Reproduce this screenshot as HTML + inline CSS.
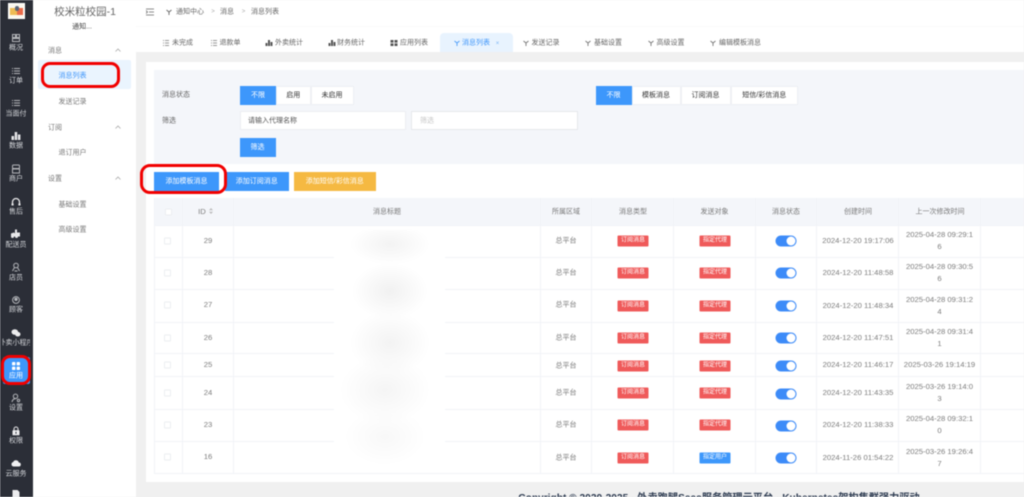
<!DOCTYPE html>
<html lang="zh"><head><meta charset="utf-8"><title>消息列表</title>
<style>
html,body{margin:0;padding:0;width:1024px;height:497px;overflow:hidden;background:#f0f0f0}
body{font-family:"Liberation Sans","Noto Sans CJK SC",sans-serif;font-size:7px;color:#666;position:relative}
#w{position:absolute;left:0;top:0;width:1024px;height:497px;overflow:hidden;filter:blur(.42px)}
.b{position:absolute;box-sizing:border-box}
.t{position:absolute;white-space:nowrap;transform:translate(-50%,-50%);line-height:1}
.l{position:absolute;white-space:nowrap;transform:translateY(-50%);line-height:1}
.s{color:#d4d6da;font-size:7px}
.i{position:absolute;transform:translate(-50%,-50%)}
.g{color:#777}
.btn{position:absolute;box-sizing:border-box;background:#fff;color:#333;text-align:center;font-size:7px;line-height:18px;height:19px;border:1px solid #eef0f4}
.on{background:#3d97fb;color:#fff;border-color:#3d97fb}
.tag{position:absolute;width:31px;height:11px;background:#ef5a5a;color:#fff;font-size:6px;line-height:11px;text-align:center;border-radius:1px;transform:translate(-50%,-50%)}
.sw{position:absolute;width:21px;height:11px;background:#3d8bf8;border-radius:6px;transform:translate(-50%,-50%)}
.sw:after{content:"";position:absolute;right:1px;top:1px;width:9px;height:9px;border-radius:50%;background:#fff}
.cb{position:absolute;box-sizing:border-box;left:164px;width:7px;height:7px;border:1px solid #eceef1;background:#fff;border-radius:1px;transform:translateY(-50%)}
.hl{position:absolute;left:154px;right:0;height:1px;background:#f1f3f7}
.vl{position:absolute;top:198px;height:276px;width:1px;background:#f1f3f7}
.r{position:absolute;border:3px solid #f10000;box-sizing:border-box;background:transparent}
.tb{color:#666;font-size:7px}
.c{color:#777;font-size:7px}
.d{color:#7c7c7c;font-size:7.7px}
</style></head><body><div id="w">

<!-- dark sidebar -->
<div class="b" style="left:0;top:0;width:33px;height:497px;background:#2b2e37"></div>
<div class="b" style="left:8px;top:3px;width:17px;height:16px;background:#fbf7ee;border:1px solid #fff"></div>
<div class="b" style="left:10px;top:8px;width:7px;height:7px;background:#eebb55"></div>
<div class="b" style="left:17px;top:8px;width:6px;height:7px;background:#ea6a4a"></div>
<div class="b" style="left:15px;top:6px;width:4px;height:5px;background:#5a6478;border-radius:2px"></div>

<svg class="i" style="left:16px;top:38px" width="8" height="8" viewBox="0 0 8 8" fill="none" stroke="#b4b6ba" stroke-width="1"><rect x=".5" y=".5" width="3" height="3"/><rect x="4.500" y=".5" width="3" height="3"/><rect x=".5" y="4.500" width="7" height="3"/></svg>
<svg class="i" style="left:16px;top:71px" width="8" height="7" viewBox="0 0 8 7" stroke="#b4b6ba" stroke-width="1"><path d="M0 1h1M2 1h6M0 3.500h1M2 3.500h6M0 6h1M2 6h6"/></svg>
<svg class="i" style="left:16px;top:103px" width="8" height="7" viewBox="0 0 8 7" stroke="#b4b6ba" stroke-width="1"><path d="M0 1h1M2 1h6M0 3.500h1M2 3.500h6M0 6h1M2 6h6"/></svg>
<svg class="i" style="left:16px;top:136px" width="9" height="8" viewBox="0 0 9 8" fill="#e8e8ea"><rect x="0" y="4" width="2.500" height="4"/><rect x="3.200" y="0" width="2.500" height="8"/><rect x="6.400" y="2.500" width="2.500" height="5.500"/></svg>
<svg class="i" style="left:16px;top:169px" width="9" height="9" viewBox="0 0 9 9" fill="none" stroke="#b4b6ba" stroke-width="1"><rect x="1" y=".5" width="7" height="3.500" rx="1"/><path d="M.5 4.500h8M1 4.500v4h7v-4"/></svg>
<svg class="i" style="left:16px;top:202px" width="9" height="9" viewBox="0 0 9 9" fill="none" stroke="#e8e8ea" stroke-width="1.300"><path d="M1 7V4.500a3.500 3.500 0 0 1 7 0V7"/><path d="M1 6v2M8 6v2" stroke-width="2.200"/></svg>
<svg class="i" style="left:16px;top:234px" width="10" height="9" viewBox="0 0 10 9" fill="#e8e8ea"><path d="M4 0h2v3h3v4H7a1.500 1.500 0 0 1-3 0H3a1.500 1.500 0 0 1-3 0V4l3-1 1 1z"/></svg>
<svg class="i" style="left:16px;top:267px" width="9" height="9" viewBox="0 0 9 9" fill="none" stroke="#b4b6ba" stroke-width="1"><circle cx="4.500" cy="3" r="2.300"/><path d="M1 8.500 3 5M8 8.500 6 5M3 8.500h3"/></svg>
<svg class="i" style="left:16px;top:300px" width="8" height="8" viewBox="0 0 8 8" fill="none" stroke="#b4b6ba" stroke-width="1"><circle cx="4" cy="4" r="3.400"/><circle cx="4" cy="3.300" r="1.200" fill="#b4b6ba"/></svg>
<svg class="i" style="left:16px;top:333px" width="9" height="8" viewBox="0 0 9 8" fill="#ececee"><ellipse cx="3.300" cy="3" rx="3.300" ry="2.800"/><ellipse cx="6.300" cy="5.200" rx="2.700" ry="2.300"/></svg>
<svg class="i" style="left:16px;top:398px" width="9" height="9" viewBox="0 0 9 9" fill="none" stroke="#b4b6ba" stroke-width="1"><circle cx="4" cy="2.800" r="2.200"/><path d="M.5 8.500C1 6 2.500 5.300 4 5.300"/><circle cx="7" cy="7" r="1.200"/></svg>
<svg class="i" style="left:16px;top:431px" width="8" height="9" viewBox="0 0 8 9"><path d="M2 4V2.500a2 2 0 0 1 4 0V4" fill="none" stroke="#e8e8ea" stroke-width="1"/><rect x=".5" y="3.800" width="7" height="5" rx=".6" fill="#ececee"/><rect x="3.500" y="5.300" width="1" height="2" fill="#2b2e37"/></svg>
<svg class="i" style="left:16px;top:463px" width="10" height="7" viewBox="0 0 10 7" fill="#f0f0f2"><path d="M2.500 7a2.300 2.300 0 0 1-.3-4.500A3 3 0 0 1 7.800 3 2 2 0 0 1 7.800 7z"/></svg>
<svg class="i" style="left:16px;top:494px" width="7" height="8" viewBox="0 0 7 8" fill="#ececee"><path d="M0 0h5l2 2v6H0z"/></svg>

<div class="t s" style="left:16px;top:48px">概况</div>
<div class="t s" style="left:16px;top:81px">订单</div>
<div class="t s" style="left:16px;top:113.500px">当面付</div>
<div class="t s" style="left:16px;top:146px">数据</div>
<div class="t s" style="left:16px;top:179px">商户</div>
<div class="t s" style="left:16px;top:212px">售后</div>
<div class="t s" style="left:16px;top:245px">配送员</div>
<div class="t s" style="left:16px;top:278px">店员</div>
<div class="t s" style="left:16px;top:310px">顾客</div>
<div class="b" style="left:2px;top:337px;width:28px;height:12px;overflow:hidden"><div class="t s" style="left:14px;top:6px">外卖小程序</div></div>
<div class="b" style="left:3px;top:357px;width:27px;height:27px;background:#3d97fb;border-radius:2px"></div>
<svg class="i" style="left:16px;top:366px" width="8" height="8" viewBox="0 0 8 8" fill="#fff"><rect width="3.400" height="3.400" rx=".8"/><rect x="4.600" width="3.400" height="3.400" rx=".8"/><rect y="4.600" width="3.400" height="3.400" rx=".8"/><rect x="4.600" y="4.600" width="3.400" height="3.400" rx=".8"/></svg>
<div class="t" style="left:16px;top:376px;color:#fff">应用</div>
<div class="t s" style="left:16px;top:408px">设置</div>
<div class="t s" style="left:16px;top:441px">权限</div>
<div class="t s" style="left:16px;top:474px">云服务</div>
<div class="r" style="left:1px;top:355px;width:30px;height:30px;border-radius:9px"></div>

<!-- second sidebar -->
<div class="b" style="left:33px;top:0;width:103px;height:497px;background:#fff"></div>
<div class="t" style="left:85px;top:12px;font-size:10.500px;color:#666">校米粒校园-1</div>
<div class="t" style="left:82px;top:27px;color:#444">通知...</div>
<div class="l g" style="left:48px;top:50.500px">消息</div>
<div class="l g" style="left:48px;top:127.500px">订阅</div>
<div class="l g" style="left:48px;top:178.500px">设置</div>
<svg class="i" style="left:117.500px;top:50px" width="6" height="4" viewBox="0 0 6 4" fill="none" stroke="#aaa" stroke-width=".8"><path d="M.5 3.500 3 1l2.500 2.500"/></svg>
<svg class="i" style="left:117.500px;top:127px" width="6" height="4" viewBox="0 0 6 4" fill="none" stroke="#aaa" stroke-width=".8"><path d="M.5 3.500 3 1l2.500 2.500"/></svg>
<svg class="i" style="left:117.500px;top:178px" width="6" height="4" viewBox="0 0 6 4" fill="none" stroke="#aaa" stroke-width=".8"><path d="M.5 3.500 3 1l2.500 2.500"/></svg>
<div class="b" style="left:38px;top:60px;width:93px;height:29px;background:#eaf4fe;border-radius:2px"></div>
<div class="l" style="left:58.500px;top:76px;color:#3f96fa">消息列表</div>
<div class="l g" style="left:58.500px;top:102px">发送记录</div>
<div class="l g" style="left:58.500px;top:153px">退订用户</div>
<div class="l g" style="left:58.500px;top:204.500px">基础设置</div>
<div class="l g" style="left:58.500px;top:230px">高级设置</div>
<div class="r" style="left:41px;top:62px;width:79px;height:26px;border-radius:9px"></div>

<!-- top header -->
<div class="b" style="left:136px;top:0;width:888px;height:26px;background:#fff"></div>
<div class="b" style="left:136px;top:26px;width:888px;height:1px;background:#fafafa"></div>
<div class="b" style="left:136px;top:27px;width:888px;height:25px;background:#fff"></div>
<div class="b" style="left:136px;top:52px;width:888px;height:10px;background:#f0f0f0"></div>
<svg class="i" style="left:150px;top:11.500px" width="8" height="7" viewBox="0 0 8 7" stroke="#666" stroke-width=".8" fill="none"><path d="M0 .5h8M3 3.500h5M0 6.500h8M0 2l1.500 1.500L0 5"/></svg>
<svg class="i" style="left:168.500px;top:12px" width="7" height="6" viewBox="0 0 7 6" fill="none" stroke="#666" stroke-width=".9"><path d="M1 1 3.500 3 6 1M3.500 3v3"/></svg>
<div class="l" style="left:176px;top:11.500px;color:#666">通知中心</div>
<div class="t" style="left:213px;top:11.500px;color:#aaa;font-size:6px">&gt;</div>
<div class="l" style="left:220px;top:11.500px;color:#666">消息</div>
<div class="t" style="left:243.500px;top:11.500px;color:#aaa;font-size:6px">&gt;</div>
<div class="l" style="left:251px;top:11.500px;color:#666">消息列表</div>

<!-- tabs -->
<div class="b" style="left:440px;top:33px;width:73px;height:19px;background:#e8f3fe;border-radius:4px 4px 0 0"></div>
<svg class="i" style="left:166px;top:43px" width="6" height="6" viewBox="0 0 6 6" stroke="#777" stroke-width=".8"><path d="M0 .5h1M2 .5h4M0 3h1M2 3h4M0 5.500h1M2 5.500h4"/></svg>
<div class="l tb" style="left:172px;top:42.500px">未完成</div>
<svg class="i" style="left:213.500px;top:43px" width="6" height="6" viewBox="0 0 6 6" stroke="#777" stroke-width=".8"><path d="M0 .5h1M2 .5h4M0 3h1M2 3h4M0 5.500h1M2 5.500h4"/></svg>
<div class="l tb" style="left:219.500px;top:42.500px">退款单</div>
<svg class="i" style="left:269px;top:43px" width="7" height="6" viewBox="0 0 7 6" fill="#555"><rect y="3" width="2" height="3"/><rect x="2.500" width="2" height="6"/><rect x="5" y="2" width="2" height="4"/></svg>
<div class="l tb" style="left:275px;top:42.500px">外卖统计</div>
<svg class="i" style="left:331.500px;top:43px" width="7" height="6" viewBox="0 0 7 6" fill="#555"><rect y="3" width="2" height="3"/><rect x="2.500" width="2" height="6"/><rect x="5" y="2" width="2" height="4"/></svg>
<div class="l tb" style="left:337px;top:42.500px">财务统计</div>
<svg class="i" style="left:394px;top:43px" width="7" height="6" viewBox="0 0 7 6" fill="#555"><rect width="3" height="2.600"/><rect x="4" width="3" height="2.600"/><rect y="3.400" width="3" height="2.600"/><rect x="4" y="3.400" width="3" height="2.600"/></svg>
<div class="l tb" style="left:400px;top:42.500px">应用列表</div>
<svg class="i" style="left:456.500px;top:43px" width="7" height="6" viewBox="0 0 7 6" fill="none" stroke="#4a9dfb" stroke-width=".9"><path d="M1 1 3.500 3 6 1M3.500 3v3"/></svg>
<div class="l" style="left:462px;top:42.500px;color:#3f96fa">消息列表</div>
<div class="t" style="left:497.500px;top:43.500px;color:#7ab5f5;font-size:6px">×</div>
<svg class="i" style="left:525.500px;top:43px" width="7" height="6" viewBox="0 0 7 6" fill="none" stroke="#777" stroke-width=".9"><path d="M1 1 3.500 3 6 1M3.500 3v3"/></svg>
<div class="l tb" style="left:531.500px;top:42.500px">发送记录</div>
<svg class="i" style="left:588px;top:43px" width="7" height="6" viewBox="0 0 7 6" fill="none" stroke="#777" stroke-width=".9"><path d="M1 1 3.500 3 6 1M3.500 3v3"/></svg>
<div class="l tb" style="left:594px;top:42.500px">基础设置</div>
<svg class="i" style="left:650.500px;top:43px" width="7" height="6" viewBox="0 0 7 6" fill="none" stroke="#777" stroke-width=".9"><path d="M1 1 3.500 3 6 1M3.500 3v3"/></svg>
<div class="l tb" style="left:656.500px;top:42.500px">高级设置</div>
<svg class="i" style="left:713px;top:43px" width="7" height="6" viewBox="0 0 7 6" fill="none" stroke="#777" stroke-width=".9"><path d="M1 1 3.500 3 6 1M3.500 3v3"/></svg>
<div class="l tb" style="left:719px;top:42.500px">编辑模板消息</div>

<!-- content -->
<div class="b" style="left:146px;top:62px;width:878px;height:420px;background:#fff"></div>
<div class="b" style="left:154px;top:70px;width:870px;height:94px;background:#f4f6fa"></div>
<div class="l" style="left:162px;top:94.500px;color:#666">消息状态</div>
<div class="l" style="left:162px;top:121px;color:#666">筛选</div>
<div class="btn on" style="left:240px;top:85.500px;width:36px">不限</div>
<div class="btn" style="left:276px;top:85.500px;width:34.500px">启用</div>
<div class="btn" style="left:310.500px;top:85.500px;width:43px">未启用</div>
<div class="btn on" style="left:595.500px;top:85.500px;width:36px">不限</div>
<div class="btn" style="left:631.500px;top:85.500px;width:49px">模板消息</div>
<div class="btn" style="left:680.500px;top:85.500px;width:50px">订阅消息</div>
<div class="btn" style="left:730.500px;top:85.500px;width:67.500px">短信/彩信消息</div>
<div class="b" style="left:239.500px;top:111px;width:166px;height:19px;background:#fff;border:1px solid #eceef2"></div>
<div class="l" style="left:248px;top:121px;color:#555">请输入代理名称</div>
<div class="b" style="left:411px;top:111px;width:167px;height:19px;background:#fff;border:1px solid #e6e8ec"></div>
<div class="l" style="left:420px;top:121px;color:#c8c8c8">筛选</div>
<div class="btn on" style="left:239.500px;top:138px;width:36px;height:18.500px;line-height:17px">筛选</div>

<div class="btn on" style="left:154px;top:172px;width:65px">添加模板消息</div>
<div class="btn on" style="left:225px;top:172px;width:63.500px">添加订阅消息</div>
<div class="btn" style="left:293.500px;top:172px;width:82.500px;background:#f5b942;border-color:#f5b942;color:#fff">添加短信/彩信消息</div>
<div class="r" style="left:140px;top:164px;width:87px;height:30px;border-radius:10px"></div>

<!-- table -->
<div class="b" style="left:154px;top:198px;width:870px;height:27px;background:#f4f6fa"></div>
<div class="hl" style="top:257px"></div><div class="hl" style="top:289px"></div><div class="hl" style="top:322px"></div><div class="hl" style="top:353px"></div><div class="hl" style="top:376px"></div><div class="hl" style="top:409px"></div><div class="hl" style="top:441px"></div><div class="hl" style="top:473px"></div><div class="hl" style="top:225px"></div>
<div class="vl" style="left:154px"></div><div class="vl" style="left:182px"></div><div class="vl" style="left:233px"></div><div class="vl" style="left:540px"></div><div class="vl" style="left:591px"></div><div class="vl" style="left:673px"></div><div class="vl" style="left:755px"></div><div class="vl" style="left:816px"></div><div class="vl" style="left:898px"></div><div class="vl" style="left:980px"></div>

<div class="cb" style="left:165px;top:211.500px"></div>
<div class="t d" style="left:202px;top:211.500px">ID</div>
<svg class="i" style="left:211px;top:211px" width="4" height="6" viewBox="0 0 4 6" fill="#bbb"><path d="M2 0l2 2.300H0zM2 6 0 3.700h4z"/></svg>
<div class="t c" style="left:387px;top:211.500px">消息标题</div>
<div class="t c" style="left:566px;top:211.500px">所属区域</div>
<div class="t c" style="left:633px;top:211.500px">消息类型</div>
<div class="t c" style="left:714.500px;top:211.500px">发送对象</div>
<div class="t c" style="left:786px;top:211.500px">消息状态</div>
<div class="t c" style="left:858px;top:211.500px">创建时间</div>
<div class="t c" style="left:940px;top:211.500px">上一次修改时间</div>

<!-- redaction -->
<div class="b" style="left:334px;top:227px;width:111px;height:241px;background:#fff"></div>
<div class="b" style="left:340px;top:230px;width:100px;height:235px;background:radial-gradient(ellipse 40px 20px at 50% 6%,#f3f3f3,transparent),radial-gradient(ellipse 38px 28px at 50% 26%,#f1f1f1,transparent),radial-gradient(ellipse 40px 32px at 50% 48%,#f3f3f3,transparent),radial-gradient(ellipse 45px 34px at 45% 68%,#f5f5f5,transparent),radial-gradient(ellipse 40px 28px at 45% 88%,#f8f8f8,transparent)"></div>

<!-- rows -->
<div class="cb" style="top:241px"></div><div class="t d" style="left:208px;top:241px">29</div><div class="t c" style="left:566px;top:241px">总平台</div><div class="tag" style="left:633px;top:241px">订阅消息</div><div class="tag" style="left:715px;top:241px">指定代理</div><div class="sw" style="left:786px;top:241px"></div><div class="t d" style="left:858px;top:241px">2024-12-20 19:17:06</div><div class="t d" style="left:939.500px;top:235px">2025-04-28 09:29:1</div><div class="t d" style="left:939.500px;top:247px">6</div>
<div class="cb" style="top:273px"></div><div class="t d" style="left:208px;top:273px">28</div><div class="t c" style="left:566px;top:273px">总平台</div><div class="tag" style="left:633px;top:273px">订阅消息</div><div class="tag" style="left:715px;top:273px">指定代理</div><div class="sw" style="left:786px;top:273px"></div><div class="t d" style="left:858px;top:273px">2024-12-20 11:48:58</div><div class="t d" style="left:939.500px;top:267px">2025-04-28 09:30:5</div><div class="t d" style="left:939.500px;top:279px">6</div>
<div class="cb" style="top:305px"></div><div class="t d" style="left:208px;top:305px">27</div><div class="t c" style="left:566px;top:305px">总平台</div><div class="tag" style="left:633px;top:305.500px">订阅消息</div><div class="tag" style="left:715px;top:305.500px">指定代理</div><div class="sw" style="left:786px;top:305.500px"></div><div class="t d" style="left:858px;top:305.500px">2024-12-20 11:48:34</div><div class="t d" style="left:939.500px;top:299.500px">2025-04-28 09:31:2</div><div class="t d" style="left:939.500px;top:311.500px">4</div>
<div class="cb" style="top:337.500px"></div><div class="t d" style="left:208px;top:337.500px">26</div><div class="t c" style="left:566px;top:337.500px">总平台</div><div class="tag" style="left:633px;top:337.500px">订阅消息</div><div class="tag" style="left:715px;top:337.500px">指定代理</div><div class="sw" style="left:786px;top:337.500px"></div><div class="t d" style="left:858px;top:337.500px">2024-12-20 11:47:51</div><div class="t d" style="left:939.500px;top:331.500px">2025-04-28 09:31:4</div><div class="t d" style="left:939.500px;top:343.500px">1</div>
<div class="cb" style="top:365px"></div><div class="t d" style="left:208px;top:365px">25</div><div class="t c" style="left:566px;top:365.500px">总平台</div><div class="tag" style="left:633px;top:365.500px">订阅消息</div><div class="tag" style="left:715px;top:365.500px">指定代理</div><div class="sw" style="left:786px;top:366px"></div><div class="t d" style="left:858px;top:365px">2024-12-20 11:46:17</div><div class="t d" style="left:939.500px;top:365px">2025-03-26 19:14:19</div>
<div class="cb" style="top:393px"></div><div class="t d" style="left:208px;top:393px">24</div><div class="t c" style="left:566px;top:393px">总平台</div><div class="tag" style="left:633px;top:393px">订阅消息</div><div class="tag" style="left:715px;top:393px">指定代理</div><div class="sw" style="left:786px;top:393.500px"></div><div class="t d" style="left:858px;top:393px">2024-12-20 11:43:35</div><div class="t d" style="left:939.500px;top:387px">2025-03-26 19:14:0</div><div class="t d" style="left:939.500px;top:399px">3</div>
<div class="cb" style="top:425px"></div><div class="t d" style="left:208px;top:425px">23</div><div class="t c" style="left:566px;top:425px">总平台</div><div class="tag" style="left:633px;top:425px">订阅消息</div><div class="tag" style="left:715px;top:425px">指定代理</div><div class="sw" style="left:786px;top:425.500px"></div><div class="t d" style="left:858px;top:425px">2024-12-20 11:38:33</div><div class="t d" style="left:939.500px;top:419px">2025-04-28 09:32:1</div><div class="t d" style="left:939.500px;top:431px">0</div>
<div class="cb" style="top:457px"></div><div class="t d" style="left:208px;top:457px">16</div><div class="t c" style="left:566px;top:457.500px">总平台</div><div class="tag" style="left:633px;top:457.500px">订阅消息</div><div class="tag" style="left:715px;top:457.500px;background:#3d97fb">指定用户</div><div class="sw" style="left:786px;top:458px"></div><div class="t d" style="left:858px;top:457.500px">2024-11-26 01:54:22</div><div class="t d" style="left:939.500px;top:451.500px">2025-03-26 19:26:4</div><div class="t d" style="left:939.500px;top:463.500px">7</div>

<!-- footer -->
<div class="t" style="left:719px;top:498.500px;font-size:10.200px;font-weight:700;color:#2c3a50">Copyright © 2020-2025 · 外卖跑腿Saas服务管理云平台 · Kubernetes架构集群强力驱动</div>
</div></body></html>
